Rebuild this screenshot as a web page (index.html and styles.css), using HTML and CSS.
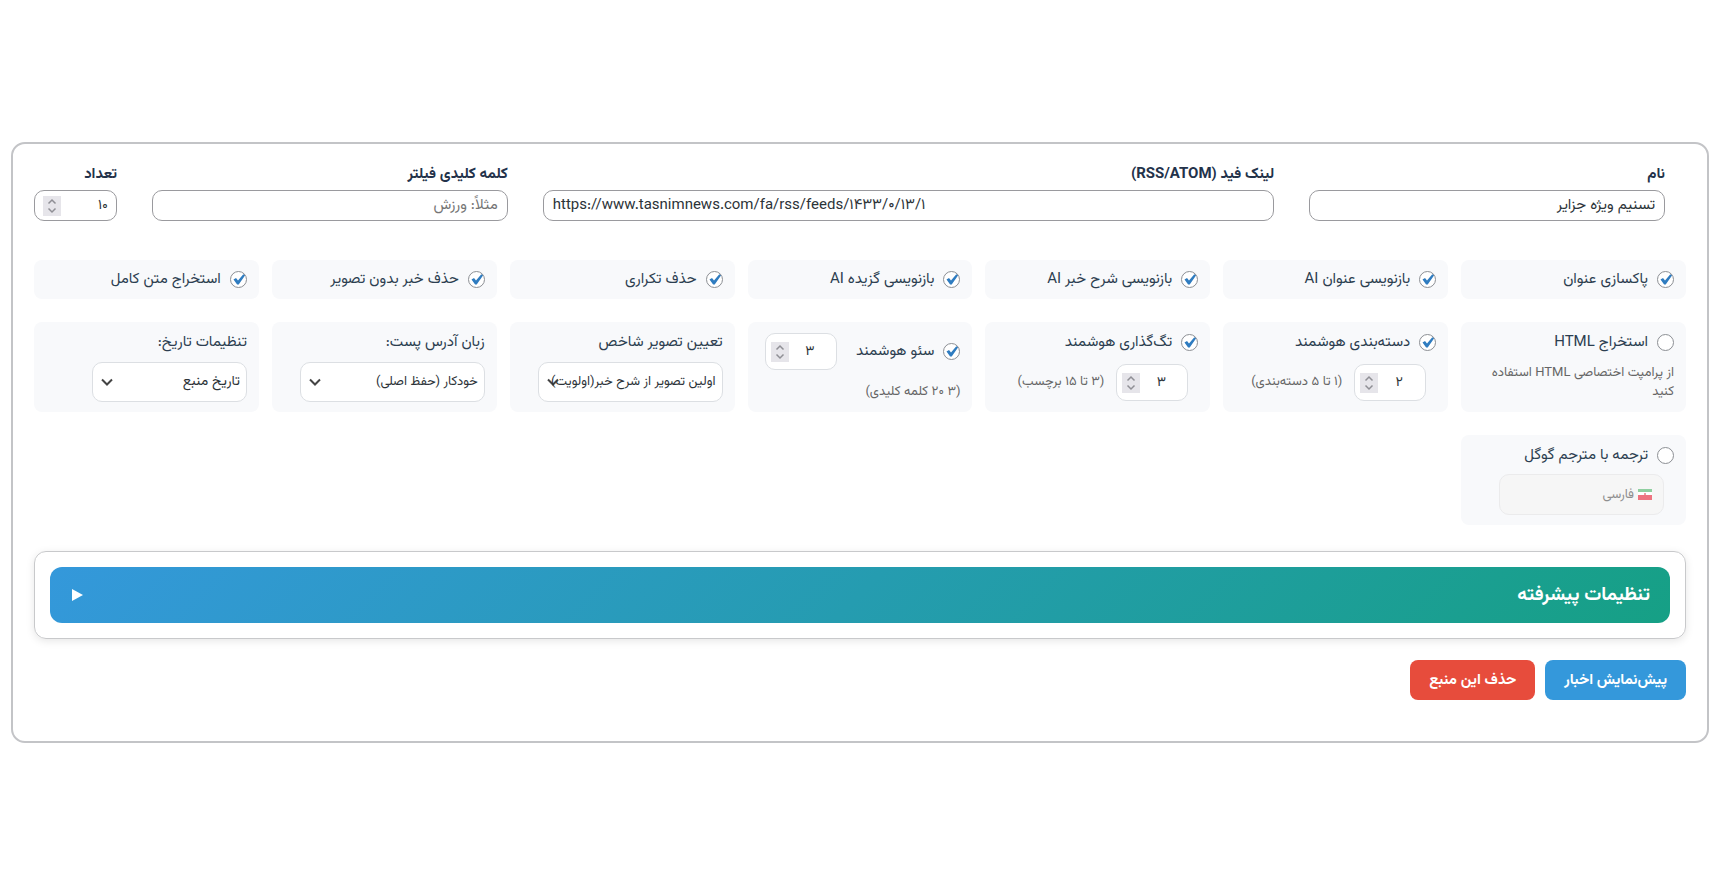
FILE: index.html
```html
<!DOCTYPE html>
<html lang="fa" dir="rtl">
<head>
<meta charset="utf-8">
<meta name="viewport" content="width=device-width, initial-scale=1">
<title>تنظیمات منبع خبر</title>
<link rel="stylesheet" href="styles.css">
</head>
<body>
<main class="page">
  <form class="source">
    <div class="fields">
      <div class="field">
        <label class="field-label" for="name">نام</label>
        <input class="text-input" id="name" type="text" value="تسنیم ویژه جزایر">
      </div>
      <div class="field">
        <label class="field-label" for="feed">لینک فید (RSS/ATOM)</label>
        <input class="text-input" id="feed" type="text" dir="ltr" value="https://www.tasnimnews.com/fa/rss/feeds/۱۴۳۳/۰/۱۳/۱">
      </div>
      <div class="field">
        <label class="field-label" for="keyword">کلمه کلیدی فیلتر</label>
        <input class="text-input" id="keyword" type="text" placeholder="مثلاً: ورزش">
      </div>
      <div class="field">
        <label class="field-label" for="count">تعداد</label>
        <div class="number number-count">
          <input class="number-input" id="count" type="text" inputmode="numeric" value="۱۰">
          <span class="spinner"><svg viewBox="0 0 18 20"><path d="M5.500 7.500 9 4l3.500 3.500M5.500 12.500 9 16l3.500-3.500"/></svg></span>
        </div>
      </div>
    </div>

    <div class="options">
      <div class="option"><label class="head"><input class="check" type="checkbox" checked>پاکسازی عنوان</label></div>
      <div class="option"><label class="head"><input class="check" type="checkbox" checked>بازنویسی عنوان AI</label></div>
      <div class="option"><label class="head"><input class="check" type="checkbox" checked>بازنویسی شرح خبر AI</label></div>
      <div class="option"><label class="head"><input class="check" type="checkbox" checked>بازنویسی گزیده AI</label></div>
      <div class="option"><label class="head"><input class="check" type="checkbox" checked>حذف تکراری</label></div>
      <div class="option"><label class="head"><input class="check" type="checkbox" checked>حذف خبر بدون تصویر</label></div>
      <div class="option"><label class="head"><input class="check" type="checkbox" checked>استخراج متن کامل</label></div>

      <div class="option option-tall">
        <label class="head"><input class="check" type="checkbox">استخراج HTML</label>
        <p class="hint hint-block">از پرامپت اختصاصی HTML استفاده کنید</p>
      </div>
      <div class="option option-tall">
        <label class="head"><input class="check" type="checkbox" checked>دسته‌بندی هوشمند</label>
        <div class="amount">
          <div class="number">
            <input class="number-input" type="text" inputmode="numeric" value="۲" aria-label="تعداد دسته‌بندی">
            <span class="spinner"><svg viewBox="0 0 18 20"><path d="M5.500 7.500 9 4l3.500 3.500M5.500 12.500 9 16l3.500-3.500"/></svg></span>
          </div>
          <span class="hint">(۱ تا ۵ دسته‌بندی)</span>
        </div>
      </div>
      <div class="option option-tall">
        <label class="head"><input class="check" type="checkbox" checked>تگ‌گذاری هوشمند</label>
        <div class="amount">
          <div class="number">
            <input class="number-input" type="text" inputmode="numeric" value="۳" aria-label="تعداد برچسب">
            <span class="spinner"><svg viewBox="0 0 18 20"><path d="M5.500 7.500 9 4l3.500 3.500M5.500 12.500 9 16l3.500-3.500"/></svg></span>
          </div>
          <span class="hint">(۳ تا ۱۵ برچسب)</span>
        </div>
      </div>
      <div class="option option-tall">
        <div class="seo">
          <label class="head"><input class="check" type="checkbox" checked>سئو هوشمند</label>
          <div class="number">
            <input class="number-input" type="text" inputmode="numeric" value="۳" aria-label="تعداد کلمه کلیدی">
            <span class="spinner"><svg viewBox="0 0 18 20"><path d="M5.500 7.500 9 4l3.500 3.500M5.500 12.500 9 16l3.500-3.500"/></svg></span>
          </div>
        </div>
        <p class="hint hint-seo">(۳ ۲۰ کلمه کلیدی)</p>
      </div>
      <div class="option option-tall">
        <label class="head" for="thumb">تعیین تصویر شاخص</label>
        <select class="select" id="thumb"><option>اولین تصویر از شرح خبر(اولویت)</option></select>
      </div>
      <div class="option option-tall">
        <label class="head" for="slug">زبان آدرس پست:</label>
        <select class="select" id="slug"><option>خودکار (حفظ اصلی)</option></select>
      </div>
      <div class="option option-tall">
        <label class="head" for="date">تنظیمات تاریخ:</label>
        <select class="select select-date" id="date"><option>تاریخ منبع</option></select>
      </div>

      <div class="option option-tall">
        <label class="head"><input class="check" type="checkbox">ترجمه با مترجم گوگل</label>
        <div class="language">
          <svg class="flag" viewBox="0 0 14 12"><path fill="#8fcfa0" d="M0 0h14v3H0z"/><path fill="#fff" d="M0 3h14v4H0z"/><path fill="#ee7480" d="M0 6h14v5H0z"/><path fill="#ee9aa2" d="M6 4h2v2H6z"/></svg>
          <select class="language-select" disabled aria-label="زبان مقصد"><option>فارسی</option></select>
        </div>
      </div>
    </div>

    <section class="advanced">
      <button class="advanced-toggle" type="button">
        <span>تنظیمات پیشرفته</span>
        <svg class="arrow" viewBox="0 0 12 12"><path d="M0 0 11 6 0 12z"/></svg>
      </button>
    </section>

    <div class="actions">
      <button class="button button-preview" type="button">پیش‌نمایش اخبار</button>
      <button class="button button-delete" type="button">حذف این منبع</button>
    </div>
  </form>
</main>
</body>
</html>
```
FILE: styles.css
```css
* { box-sizing: border-box; }

body {
  margin: 0;
  background: #fff;
  color: #2c3e50;
  font-family: Vazirmatn, Roboto, "Noto Sans Arabic", "DejaVu Sans", sans-serif;
  font-size: 15px;
}

input, select, button { font: inherit; color: inherit; }
p { margin: 0; }

.page {
  display: flex;
  align-items: center;
  min-height: 100vh;
  padding: 0 16px 3px 11px;
}

.source {
  flex: 1;
  min-width: 0;
  padding: 20px 21px 41px;
  border: 2px solid #c3c4c7;
  border-radius: 14px;
}

.fields {
  display: grid;
  grid-template-columns: 356fr 732fr 356fr 83fr;
  gap: 35px;
  padding-right: 21px;
}

.field { min-width: 0; }

.field-label {
  display: block;
  margin-bottom: 4px;
  line-height: 22px;
  font-weight: 700;
  color: #23324a;
}

.text-input, .number {
  width: 100%;
  height: 31px;
  border: 1px solid #9a9a9e;
  border-radius: 10px;
  background: #fff;
  color: #2c3338;
}

.text-input { padding: 0 9px; }
.text-input::placeholder { color: #757575; opacity: 1; }

.number {
  display: flex;
  align-items: center;
  flex: none;
  width: 72px;
  height: 37px;
  padding: 0 5px;
  border-color: #dcdfe3;
}

.number-count {
  width: 100%;
  height: 31px;
  padding: 0 8px;
  border-color: #9a9a9e;
}

.number-input {
  flex: 1;
  min-width: 0;
  padding: 0;
  border: 0;
  outline: 0;
  background: none;
  font-size: 14px;
  text-align: center;
}

.number-count .number-input { text-align: right; }

.spinner {
  display: flex;
  flex: none;
  width: 18px;
  height: 20px;
  background: #e6e5ea;
}

.spinner svg {
  width: 18px;
  height: 20px;
  fill: none;
  stroke: #8f8f95;
  stroke-width: 1.500;
}

.options {
  display: grid;
  grid-template-columns: repeat(7, minmax(0, 1fr));
  gap: 23px 13px;
  margin-top: 39px;
}

.option {
  padding: 8px 12px;
  border-radius: 8px;
  background: #f8f9fb;
}

.option-tall {
  min-height: 90px;
  padding-top: 9px;
}

.head {
  display: flex;
  align-items: center;
  gap: 9px;
  line-height: 23px;
  white-space: nowrap;
}

.check {
  flex: none;
  width: 17px;
  height: 17px;
  margin: 0;
  appearance: none;
  border: 1px solid #8c8f94;
  border-radius: 50%;
  background: #fff;
}

.check:checked {
  background: #fff url("data:image/svg+xml,%3Csvg xmlns='http://www.w3.org/2000/svg' viewBox='0 0 15 15'%3E%3Cpath d='M2.500 7.400 5 5.900 7 8.400 12.300 2.200 14.200 3.200 7.700 12.600 6.100 12.600z' fill='%232f7cc0'/%3E%3C/svg%3E") center / 15px no-repeat;
}

.hint {
  font-size: 13px;
  line-height: 19px;
  color: #666;
  white-space: nowrap;
}

.hint-block { margin-top: 10px; white-space: normal; }
.hint-seo { margin-top: 13px; }

.amount {
  display: flex;
  align-items: center;
  gap: 12px;
  margin: 10px 10px 0 0;
}

.seo {
  display: flex;
  align-items: center;
  gap: 19px;
  margin-top: 2px;
}

.select {
  display: block;
  width: 185px;
  max-width: 100%;
  height: 40px;
  margin-top: 8px;
  padding: 0 6px;
  appearance: none;
  border: 1px solid #dcdfe3;
  border-radius: 10px;
  background: #fff url("data:image/svg+xml,%3Csvg xmlns='http://www.w3.org/2000/svg' viewBox='0 0 12 8'%3E%3Cpath d='M1 1.500 6 6.500 11 1.500' fill='none' stroke='%23444' stroke-width='2'/%3E%3C/svg%3E") left 8px center / 12px 8px no-repeat;
  color: #2c3338;
  font-size: 13px;
}

.select-date { width: 155px; font-size: 14px; }

.language {
  display: flex;
  align-items: center;
  gap: 4px;
  width: 165px;
  height: 41px;
  margin: 7px 10px 2px 0;
  padding: 0 11px;
  border: 1px solid #ebebec;
  border-radius: 10px;
  background: #f6f6f6;
}

.flag { flex: none; width: 14px; height: 12px; }

.language-select {
  flex: 1;
  min-width: 0;
  padding: 0;
  appearance: none;
  border: 0;
  background: none;
  color: #8f8f8f;
  font-size: 13px;
  opacity: 1;
}

.advanced {
  margin-top: 26px;
  padding: 15px;
  border: 1px solid #c8c9cb;
  border-radius: 12px;
  box-shadow: 0 2px 8px rgba(0, 0, 0, 0.1);
}

.advanced-toggle {
  display: flex;
  align-items: center;
  justify-content: space-between;
  width: 100%;
  height: 56px;
  padding: 0 20px 0 22px;
  border: 0;
  border-radius: 12px;
  background: linear-gradient(135deg, #3498db, #16a085);
  color: #fff;
  font-size: 19px;
  font-weight: 700;
}

.arrow { width: 12px; height: 12px; fill: #fff; }

.actions {
  display: flex;
  gap: 10px;
  margin-top: 21px;
}

.button {
  height: 40px;
  padding: 0 19px;
  border: 0;
  border-radius: 8px;
  color: #fff;
  font-weight: 700;
}

.button-preview { background: #3498db; }
.button-delete { background: #e74c3c; }
```
